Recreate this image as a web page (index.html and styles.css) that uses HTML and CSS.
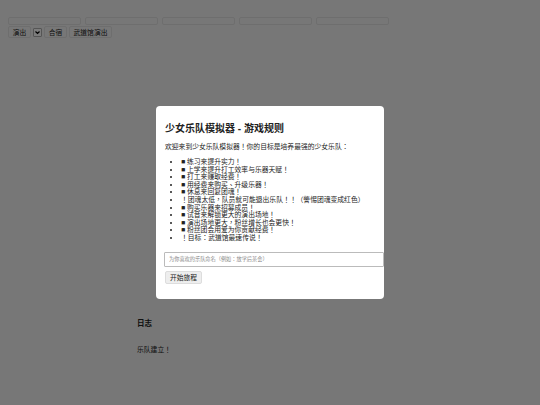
FILE: index.html
```html
<!DOCTYPE html>
<html lang="zh-TW">
<head>
<meta charset="utf-8">
<title>少女乐队模拟器</title>
<link rel="stylesheet" href="styles.css">
</head>
<body>
<div class="bars">
  <div class="bar"></div><div class="bar"></div><div class="bar"></div><div class="bar"></div><div class="bar"></div>
</div>
<div class="actions">
  <button class="btn">演出</button>
  <select class="sel"><option></option></select>
  <button class="btn">合宿</button>
  <button class="btn">武道馆演出</button>
</div>
<section class="log">
  <h3 class="log-title">日志</h3>
  <p class="log-line">乐队建立！</p>
</section>
<div class="overlay">
  <div class="modal">
    <h2 class="modal-title">少女乐队模拟器 - 游戏规则</h2>
    <p class="intro">欢迎来到少女乐队模拟器！你的目标是培养最强的少女乐队：</p>
    <ul class="rules">
      <li>■ 练习来提升实力！</li>
      <li>■ 上学来提升打工效率与乐器天赋！</li>
      <li>■ 打工来赚取经费！</li>
      <li>■ 用经费来购买、升级乐器！</li>
      <li>■ 休息来回复团魂！</li>
      <li>！团魂太低，队员就可能退出乐队！！（警惕团魂变成红色）</li>
      <li>■ 购买乐器来招募成员！</li>
      <li>■ 试音来解锁更大的演出场地！</li>
      <li>■ 演出场地更大，粉丝增长也会更快！</li>
      <li>■ 粉丝团会用爱为你贡献经费！</li>
      <li>！目标：武道馆最速传说！</li>
    </ul>
    <input class="name" type="text" placeholder="为你喜欢的乐队命名（例如：放学后茶会）">
    <button class="start">开始旅程</button>
  </div>
</div>
</body>
</html>
```
FILE: styles.css
```css
html, body { margin: 0; height: 100%; }
body {
  background: #eee;
  color: #222;
  font-family: "Liberation Sans", "Noto Sans CJK TC", sans-serif;
  font-size: 6.8px;
  padding: 17px 8px 0;
  box-sizing: border-box;
}
.bars { display: flex; gap: 4px; }
.bar {
  width: 73px;
  height: 8px;
  box-sizing: border-box;
  border: 1px solid #ddd;
  border-radius: 2px;
}
.actions { display: flex; gap: 2px; align-items: center; margin-top: 1px; }
.btn, .start {
  font-family: inherit;
  font-size: 6.8px;
  height: 12px;
  padding: 0;
  background: #eee;
  color: #222;
  border: 1px solid #ddd;
  border-radius: 2px;
}
.btn { width: 23px; }
.btn:last-child { width: 43px; }
.sel {
  appearance: none;
  width: 9px;
  height: 9px;
  padding: 0;
  margin: 0;
  border: 1px solid #aaa;
  border-radius: 1px;
  background: #f8f8f8 url("data:image/svg+xml,%3Csvg xmlns='http://www.w3.org/2000/svg' viewBox='0 0 7 7'%3E%3Cpath d='M1.5 2.5 3.5 4.5 5.5 2.5' fill='none' stroke='%23000' stroke-width='1.2'/%3E%3C/svg%3E") center / 7px 7px no-repeat;
}
.log { margin: 281px 0 0 129px; }
.log-title { font-size: 7.5px; font-weight: bold; margin: 0; line-height: 10px; }
.log-line { margin: 16px 0 0; line-height: 10px; }
.overlay {
  position: fixed;
  inset: 0;
  display: flex;
  align-items: center;
  justify-content: center;
  background: rgba(0, 0, 0, .5);
}
.modal {
  width: 228px;
  height: 193px;
  box-sizing: border-box;
  padding: 16px 0 0 9px;
  background: #fff;
  border-radius: 4px;
}
.modal-title { font-size: 10px; font-weight: bold; margin: 0; line-height: 13px; }
.intro { margin: 7px 0 0; line-height: 9px; }
.rules { margin: 7px 0 0; padding-left: 16px; line-height: 7.6px; }
.name {
  display: block;
  width: 220px;
  height: 15px;
  box-sizing: border-box;
  margin: 10px 0 0 -1px;
  padding: 0 4px;
  font-family: inherit;
  font-size: 5.2px;
  border: 1px solid #bbb;
  border-radius: 1px;
  background: #fff;
}
.name::placeholder { color: #888; }
.start { display: block; margin: 4px 0 0 0; height: 13px; width: 37px; }
```
